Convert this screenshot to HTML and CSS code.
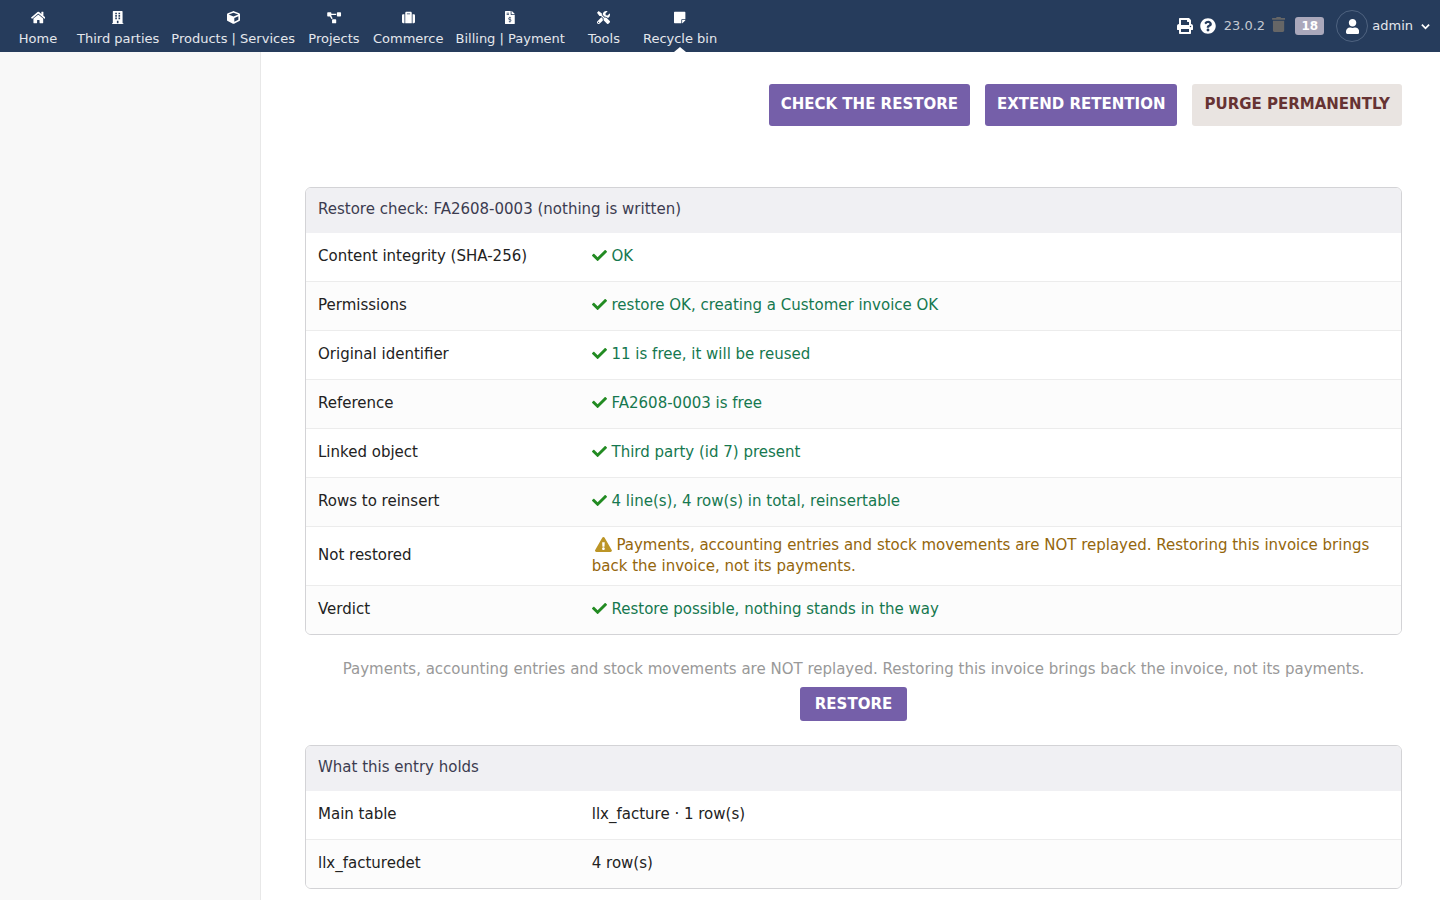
FILE: index.html
```html
<!DOCTYPE html>
<html lang="en">
<head>
    <meta charset="UTF-8">
    <meta name="viewport" content="width=device-width, initial-scale=1.0">
    <title>Recycle bin</title>
    <link rel="stylesheet" href="styles.css">
</head>
<body>
    <header class="topbar">
        <nav class="menu">
            <a class="menu-item" href="#">
                <svg class="menu-icon" viewBox="0 0 576 512"><path d="M280.37 148.26L96 300.11V464a16 16 0 0 0 16 16l112.06-.29a16 16 0 0 0 15.92-16V368a16 16 0 0 1 16-16h64a16 16 0 0 1 16 16v95.64a16 16 0 0 0 16 16.05L464 480a16 16 0 0 0 16-16V300L295.67 148.26a12.19 12.19 0 0 0-15.3 0zM571.6 251.47L488 182.56V44.05a12 12 0 0 0-12-12h-56a12 12 0 0 0-12 12v72.61L318.47 43a48 48 0 0 0-61 0L4.34 251.47a12 12 0 0 0-1.6 16.9l25.5 31A12 12 0 0 0 45.15 301l235.22-193.74a12.19 12.19 0 0 1 15.3 0L530.9 301a12 12 0 0 0 16.9-1.6l25.5-31a12 12 0 0 0-1.7-16.93z"/></svg>
                <span>Home</span>
            </a>
            <a class="menu-item" href="#">
                <svg class="menu-icon" viewBox="0 0 448 512"><path fill-rule="evenodd" d="M436 480h-20V24c0-13.255-10.745-24-24-24H56C42.745 0 32 10.745 32 24v456H12c-6.627 0-12 5.373-12 12v20h448v-20c0-6.627-5.373-12-12-12zM128 64h64v64h-64zM256 64h64v64h-64zM128 160h64v64h-64zM256 160h64v64h-64zM128 256h64v64h-64zM256 256h64v64h-64zM192 384h64v96h-64z"/></svg>
                <span>Third parties</span>
            </a>
            <a class="menu-item" href="#">
                <svg class="menu-icon" viewBox="0 0 512 512"><path d="M239.1 6.3l-208 78c-18.7 7-31.1 25-31.1 45v225.1c0 18.2 10.3 34.8 26.5 42.9l208 104c13.5 6.8 29.4 6.8 42.9 0l208-104c16.3-8.1 26.5-24.8 26.5-42.9V129.3c0-20-12.4-37.9-31.1-44.9l-208-78C262 2.2 250 2.2 239.1 6.3zM256 68.4l192 72v1.1l-192 78-192-78v-1.1l192-72zm32 356V275.5l160-65v133.9l-160 80z"/></svg>
                <span>Products | Services</span>
            </a>
            <a class="menu-item" href="#">
                <svg class="menu-icon" viewBox="0 0 640 512"><path d="M384 320H256c-17.67 0-32 14.33-32 32v128c0 17.67 14.33 32 32 32h128c17.67 0 32-14.33 32-32V352c0-17.67-14.33-32-32-32zM192 32c0-17.67-14.33-32-32-32H32C14.33 0 0 14.33 0 32v128c0 17.67 14.33 32 32 32h95.72l73.16 128.04C211.98 300.98 232.4 288 256 288h.28L192 175.51V128h224V64H192V32zM608 0H480c-17.67 0-32 14.33-32 32v128c0 17.67 14.33 32 32 32h128c17.67 0 32-14.33 32-32V32c0-17.67-14.33-32-32-32z" transform="translate(48 51) scale(.85)"/></svg>
                <span>Projects</span>
            </a>
            <a class="menu-item" href="#">
                <svg class="menu-icon" viewBox="0 0 512 512"><path d="M128 480h256V80c0-26.5-21.5-48-48-48H176c-26.5 0-48 21.5-48 48v400zm64-384h128v32H192V96zm320 80v256c0 26.5-21.5 48-48 48h-48V128h48c26.5 0 48 21.5 48 48zM96 480H48c-26.5 0-48-21.5-48-48V176c0-26.5 21.5-48 48-48h48v352z"/></svg>
                <span>Commerce</span>
            </a>
            <a class="menu-item" href="#">
                <svg class="menu-icon" viewBox="0 0 384 512"><path d="M377 105L279.1 7c-4.5-4.5-10.6-7-17-7H256v128h128v-6.1c0-6.3-2.5-12.4-7-16.9zm-153 31V0H24C10.7 0 0 10.7 0 24v464c0 13.3 10.7 24 24 24h336c13.3 0 24-10.7 24-24V160H248c-13.2 0-24-10.8-24-24zM64 72c0-4.42 3.58-8 8-8h80c4.42 0 8 3.58 8 8v16c0 4.42-3.58 8-8 8H72c-4.42 0-8-3.58-8-8V72zm0 80v-16c0-4.42 3.58-8 8-8h80c4.42 0 8 3.58 8 8v16c0 4.42-3.58 8-8 8H72c-4.42 0-8-3.58-8-8zm144 263.88V440c0 4.42-3.58 8-8 8h-16c-4.42 0-8-3.58-8-8v-24.29c-11.29-.58-22.27-4.52-31.37-11.35-3.9-2.93-4.1-8.77-.57-12.14l11.75-11.21c2.77-2.64 6.89-2.76 10.13-.73 3.87 2.42 8.26 3.72 12.82 3.72h28.11c6.5 0 11.8-5.92 11.8-13.19 0-5.95-3.61-11.19-8.77-12.73l-45-13.5c-18.59-5.58-31.58-23.42-31.58-43.39 0-24.52 19.05-44.44 42.67-45.07V232c0-4.42 3.58-8 8-8h16c4.42 0 8 3.58 8 8v24.29c11.29.58 22.27 4.51 31.37 11.35 3.9 2.93 4.1 8.77.57 12.14l-11.75 11.21c-2.77 2.64-6.89 2.76-10.13.73-3.87-2.43-8.26-3.72-12.82-3.72h-28.11c-6.5 0-11.8 5.92-11.8 13.19 0 5.95 3.61 11.19 8.77 12.73l45 13.5c18.59 5.58 31.58 23.42 31.58 43.39 0 24.53-19.05 44.44-42.67 45.07z"/></svg>
                <span>Billing | Payment</span>
            </a>
            <a class="menu-item" href="#">
                <svg class="menu-icon" viewBox="0 0 512 512"><path d="M501.1 395.7L384 278.6c-23.1-23.1-57.6-27.6-85.4-13.9L192 158.1V96L64 0 0 64l96 128h62.1l106.6 106.6c-13.6 27.8-9.2 62.3 13.9 85.4l117.1 117.1c14.6 14.6 38.2 14.6 52.7 0l52.7-52.7c14.5-14.6 14.5-38.2 0-52.7zM331.7 225c28.3 0 54.9 11 74.9 31l19.4 19.4c15.8-6.9 30.8-16.5 43.8-29.5 37.1-37.1 49.7-89.3 37.9-136.7-2.2-9-13.5-12.1-20.1-5.5l-74.4 74.4-67.9-11.3L334 98.9l74.4-74.4c6.6-6.6 3.4-17.9-5.7-20.2-47.4-11.7-99.6.9-136.6 37.9-28.5 28.5-41.9 66.1-41.2 103.6l82.1 82.1c8.1-1.9 16.5-2.9 24.7-2.9zm-103.9 82l-56.7-56.7L18.7 402.8c-25 25-25 65.5 0 90.5s65.5 25 90.5 0l123.6-123.6c-7.6-19.9-9.9-41.6-5-62.7zM64 472c-13.2 0-24-10.8-24-24 0-13.3 10.7-24 24-24s24 10.7 24 24c0 13.2-10.7 24-24 24z"/></svg>
                <span>Tools</span>
            </a>
            <a class="menu-item active" href="#">
                <svg class="menu-icon" viewBox="0 0 448 512"><path d="M312 320h136V56c0-13.3-10.7-24-24-24H24C10.7 32 0 42.7 0 56v400c0 13.3 10.7 24 24 24h264V344c0-13.2 10.8-24 24-24zm129 55l-98 98c-4.5 4.5-10.6 7-17 7h-6V352h128v6.1c0 6.3-2.5 12.4-7 16.9z"/></svg>
                <span>Recycle bin</span>
            </a>
        </nav>

        <div class="tools">
            <a class="tool" href="#" aria-label="Print">
                <svg class="tool-icon" viewBox="0 0 512 512"><path d="M448 192V77.25c0-8.49-3.37-16.62-9.37-22.63L393.37 9.37c-6-6-14.14-9.37-22.63-9.37H96C78.33 0 64 14.33 64 32v160c-35.35 0-64 28.65-64 64v112c0 8.84 7.16 16 16 16h48v96c0 17.67 14.33 32 32 32h320c17.67 0 32-14.33 32-32v-96h48c8.84 0 16-7.16 16-16V256c0-35.35-28.65-64-64-64zm-64 256H128v-96h256v96zm0-224H128V64h192v48c0 8.84 7.16 16 16 16h48v96zm48 72c-13.25 0-24-10.75-24-24 0-13.26 10.75-24 24-24s24 10.74 24 24c0 13.25-10.75 24-24 24z"/></svg>
            </a>
            <a class="tool" href="#" aria-label="Help">
                <svg class="tool-icon" viewBox="0 0 512 512"><path d="M504 256c0 136.997-111.043 248-248 248S8 392.997 8 256C8 119.083 119.043 8 256 8s248 111.083 248 248zM262.655 90c-54.497 0-89.255 22.957-116.549 63.758-3.536 5.286-2.353 12.415 2.715 16.258l34.699 26.31c5.205 3.947 12.621 3.008 16.665-2.122 17.864-22.658 30.113-35.797 57.303-35.797 20.429 0 45.698 13.148 45.698 32.958 0 14.976-12.363 22.667-32.534 33.976C247.128 238.528 216 254.941 216 296v4c0 6.627 5.373 12 12 12h56c6.627 0 12-5.373 12-12v-1.333c0-28.462 83.186-29.647 83.186-106.667 0-58.002-60.165-102-116.531-102zM256 338c-25.365 0-46 20.635-46 46 0 25.364 20.635 46 46 46s46-20.636 46-46c0-25.365-20.635-46-46-46z"/></svg>
            </a>
            <span class="version">23.0.2</span>
            <a class="bin" href="#" aria-label="Recycle bin, 18 entries">
                <svg class="bin-icon" viewBox="0 0 448 512"><path d="M432 32H312l-9.4-18.7A24 24 0 0 0 281.1 0H166.8a23.72 23.72 0 0 0-21.4 13.3L136 32H16A16 16 0 0 0 0 48v32a16 16 0 0 0 16 16h416a16 16 0 0 0 16-16V48a16 16 0 0 0-16-16zM32 464a48 48 0 0 0 48 48h288a48 48 0 0 0 48-48V128H32z"/></svg>
                <span class="badge">18</span>
            </a>
            <a class="user" href="#">
                <span class="avatar">
                    <svg class="avatar-icon" viewBox="0 0 448 512"><path d="M224 256c70.7 0 128-57.3 128-128S294.7 0 224 0 96 57.3 96 128s57.3 128 128 128zm89.6 32h-16.7c-22.2 10.2-46.9 16-72.9 16s-50.6-5.8-72.9-16h-16.7C60.2 288 0 348.2 0 422.4V464c0 26.5 21.5 48 48 48h352c26.5 0 48-21.5 48-48v-41.6c0-74.2-60.2-134.4-134.4-134.4z"/></svg>
                </span>
                <span>admin</span>
                <svg class="chevron" viewBox="0 0 10 10"><path d="M1 3l4 4 4-4"/></svg>
            </a>
        </div>
    </header>

    <div class="page">
        <aside class="sidebar"></aside>

        <main class="content">
            <div class="actions">
                <button type="button" class="button">CHECK THE RESTORE</button>
                <button type="button" class="button">EXTEND RETENTION</button>
                <button type="button" class="button button-delete">PURGE PERMANENTLY</button>
            </div>

            <table class="list">
                <thead>
                    <tr><th colspan="2">Restore check: FA2608-0003 (nothing is written)</th></tr>
                </thead>
                <tbody>
                    <tr>
                        <td class="label">Content integrity (SHA-256)</td>
                        <td class="ok"><svg class="check" viewBox="0 0 512 512"><use href="#check"/></svg> OK</td>
                    </tr>
                    <tr>
                        <td class="label">Permissions</td>
                        <td class="ok"><svg class="check" viewBox="0 0 512 512"><use href="#check"/></svg> restore OK, creating a Customer invoice OK</td>
                    </tr>
                    <tr>
                        <td class="label">Original identifier</td>
                        <td class="ok"><svg class="check" viewBox="0 0 512 512"><use href="#check"/></svg> 11 is free, it will be reused</td>
                    </tr>
                    <tr>
                        <td class="label">Reference</td>
                        <td class="ok"><svg class="check" viewBox="0 0 512 512"><use href="#check"/></svg> FA2608-0003 is free</td>
                    </tr>
                    <tr>
                        <td class="label">Linked object</td>
                        <td class="ok"><svg class="check" viewBox="0 0 512 512"><use href="#check"/></svg> Third party (id 7) present</td>
                    </tr>
                    <tr>
                        <td class="label">Rows to reinsert</td>
                        <td class="ok"><svg class="check" viewBox="0 0 512 512"><use href="#check"/></svg> 4 line(s), 4 row(s) in total, reinsertable</td>
                    </tr>
                    <tr>
                        <td class="label">Not restored</td>
                        <td class="warning"><svg class="warning-icon" viewBox="0 0 576 512"><path d="M569.517 440.013C587.975 472.007 564.806 512 527.94 512H48.054c-36.937 0-59.999-40.055-41.577-71.987L246.423 23.985c18.467-32.009 64.72-31.951 83.154 0l239.94 416.028zM288 354c-25.405 0-46 20.595-46 46s20.595 46 46 46 46-20.595 46-46-20.595-46-46-46zm-43.673-165.346l7.418 136c.347 6.364 5.609 11.346 11.982 11.346h48.546c6.373 0 11.635-4.982 11.982-11.346l7.418-136c.375-6.874-5.098-12.654-11.982-12.654h-63.383c-6.884 0-12.356 5.78-11.981 12.654z"/></svg> Payments, accounting entries and stock movements are NOT replayed. Restoring this invoice brings back the invoice, not its payments.</td>
                    </tr>
                    <tr>
                        <td class="label">Verdict</td>
                        <td class="ok"><svg class="check" viewBox="0 0 512 512"><use href="#check"/></svg> Restore possible, nothing stands in the way</td>
                    </tr>
                </tbody>
            </table>

            <form class="restore">
                <p class="note">Payments, accounting entries and stock movements are NOT replayed. Restoring this invoice brings back the invoice, not its payments.</p>
                <button type="button" class="button button-small">RESTORE</button>
            </form>

            <table class="list">
                <thead>
                    <tr><th colspan="2">What this entry holds</th></tr>
                </thead>
                <tbody>
                    <tr>
                        <td class="label">Main table</td>
                        <td>llx_facture · 1 row(s)</td>
                    </tr>
                    <tr>
                        <td class="label">llx_facturedet</td>
                        <td>4 row(s)</td>
                    </tr>
                </tbody>
            </table>
        </main>
    </div>

    <!-- shared check mark -->
    <svg class="symbols" width="0" height="0" aria-hidden="true">
        <defs>
            <path id="check" d="M173.898 439.404l-166.4-166.4c-9.997-9.997-9.997-26.206 0-36.204l36.203-36.204c9.997-9.998 26.207-9.998 36.204 0L192 312.69 432.095 72.596c9.997-9.997 26.207-9.997 36.204 0l36.203 36.204c9.997 9.997 9.997 26.206 0 36.204l-294.4 294.401c-9.998 9.997-26.207 9.997-36.204-.001z"/>
        </defs>
    </svg>
</body>
</html>
```

FILE: styles.css
```css
* {
    margin: 0;
    padding: 0;
    box-sizing: border-box;
}

body {
    display: flex;
    flex-direction: column;
    min-height: 100vh;
    background: #fff;
    color: #222;
    font-family: "DejaVu Sans", sans-serif;
    font-size: 15px;
    line-height: 21px;
}

a {
    color: inherit;
    text-decoration: none;
}

svg {
    fill: currentColor;
}

.symbols {
    display: none;
}

/* Top bar */
.topbar {
    display: flex;
    justify-content: space-between;
    height: 52px;
    padding: 0 10px 0 5px;
    background: #263c5c;
    color: #e4e7ec;
    font-size: 13px;
    line-height: 16px;
}

.menu {
    display: flex;
}

.menu-item {
    position: relative;
    display: flex;
    flex-direction: column;
    align-items: center;
    gap: 7px;
    min-width: 66px;
    padding: 11px 6px 0;
    white-space: nowrap;
}

.menu-icon {
    height: 13px;
    color: #fff;
}

.menu-item.active::after {
    content: "";
    position: absolute;
    bottom: 0;
    left: calc(50% - 6px);
    border: 6px solid transparent;
    border-top: 0;
    border-bottom: 5px solid #fff;
}

.tools {
    display: flex;
    align-items: center;
}

.tool {
    display: flex;
    margin-right: 7px;
    color: #fff;
}

.tool-icon {
    width: 16px;
    height: 16px;
}

.version {
    margin: 0 7px 0 1px;
    color: #c3c8d0;
}

.bin {
    display: flex;
    align-items: center;
    gap: 10px;
    margin-right: 12px;
}

.bin-icon {
    height: 15px;
    margin-bottom: 3px;
    color: #666;
}

.badge {
    min-width: 29px;
    padding: 1px 6px;
    border-radius: 3px;
    background: #aaa8bb;
    color: #fff;
    font-size: 12px;
    font-weight: bold;
    text-align: center;
}

.user {
    display: flex;
    align-items: center;
    gap: 4px;
}

.avatar {
    display: flex;
    align-items: center;
    justify-content: center;
    width: 32px;
    height: 32px;
    border: 1px solid #4f6380;
    border-radius: 50%;
    color: #fff;
}

.avatar-icon {
    height: 15px;
}

.chevron {
    width: 9px;
    height: 9px;
    margin-left: 4px;
    fill: none;
    stroke: #fff;
    stroke-width: 2;
}

/* Page */
.page {
    display: flex;
    flex: 1;
}

.sidebar {
    flex: 0 0 261px;
    background: #f8f8f8;
    border-right: 1px solid #e8e8e8;
}

.content {
    flex: 1;
    padding: 32px 38px 11px 44px;
}

.actions {
    display: flex;
    justify-content: flex-end;
    gap: 15px;
    margin-bottom: 61px;
}

.button {
    padding: 10px 12px 11px;
    border: none;
    border-radius: 3px;
    background: #755fa9;
    color: #fff;
    font: bold 15px/21px "DejaVu Sans", sans-serif;
    cursor: pointer;
}

.button-delete {
    background: #e9e4e1;
    color: #633;
}

.button-small {
    padding: 7px 15px 6px;
}

/* Tables */
.list {
    width: 100%;
    border: 1px solid #d3d3d6;
    border-radius: 6px;
    border-spacing: 0;
    overflow: hidden;
}

.list th {
    height: 45px;
    padding: 8px 12px 10px;
    background: #f0f0f3;
    color: #3c3c50;
    font-weight: normal;
    text-align: left;
}

.list td {
    height: 49px;
    padding: 7px 12px 9px;
    border-bottom: 1px solid #ececec;
}

.list tr:last-child td {
    height: 48px;
    border-bottom: none;
}

.list tbody tr:nth-child(even) {
    background: #fcfcfc;
}

.list .label {
    width: 25%;
}

.ok {
    color: #16784f;
}

.check {
    width: 15px;
    height: 15px;
    color: #228b22;
    vertical-align: -2px;
}

.list .warning {
    padding: 8px 12px;
    color: #94660c;
}

.warning-icon {
    height: 15px;
    margin-left: 3px;
    color: #bc9526;
    vertical-align: -2px;
}

.restore {
    margin: 24px 0;
    text-align: center;
}

.note {
    margin-bottom: 7px;
    color: #999;
}
```
